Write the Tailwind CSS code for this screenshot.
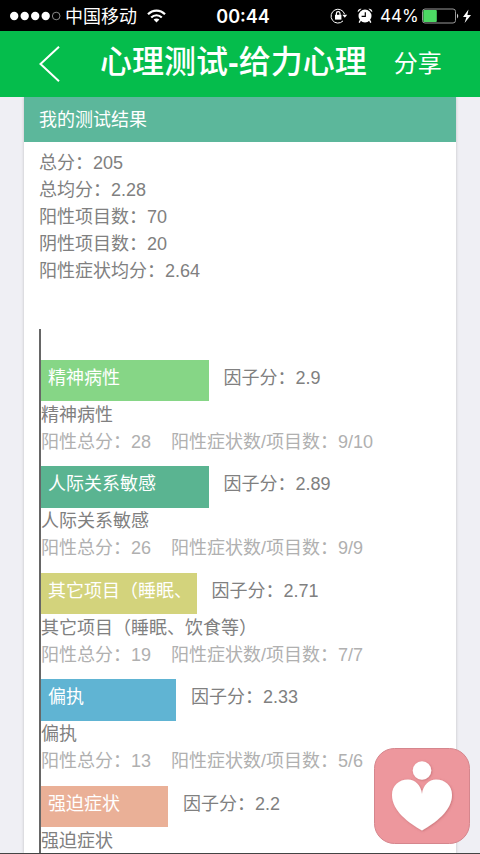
<!DOCTYPE html>
<html lang="zh-CN">
	<head>
		<meta charset="UTF-8" />
		<meta name="viewport" content="width=device-width, initial-scale=1.0" />
		<title>心理测试-给力心理</title>
		<script src="https://cdn.jsdelivr.net/npm/@tailwindcss/browser@4"></script>
	</head>
	<body class="relative flex h-[854px] w-[480px] flex-col overflow-hidden bg-[#efeff4] font-['Liberation_Sans','Noto_Sans_CJK_SC',sans-serif] text-lg leading-[27px] text-[#808080]">
		<!-- Status bar -->
		<div class="grid h-[31px] shrink-0 grid-cols-[207px_72px_1fr] items-center bg-black text-white">
			<div class="flex items-center pl-[10px]">
				<svg class="h-[10px] w-[52px]" viewBox="0 0 52 10" fill="white">
					<circle cx="4.2" cy="5" r="4.2" />
					<circle cx="14.7" cy="5" r="4.2" />
					<circle cx="25.2" cy="5" r="4.2" />
					<circle cx="35.7" cy="5" r="4.2" />
					<circle cx="46.2" cy="5" r="3.8" fill="none" stroke="#aaa" stroke-width="0.8" />
				</svg>
				<span class="ml-[3px] pt-[3px]">中国移动</span>
				<svg class="ml-[10px] h-[14px] w-[19px]" viewBox="0 0 19 14" fill="none" stroke="white" stroke-width="2.2">
					<path d="M1 5.2C5.8 0.3 13.2 0.3 18 5.2" />
					<path d="M4.2 8.5C7.2 5.5 11.8 5.5 14.8 8.5" />
					<path d="M9.5 13.5L6.6 10.5C8.2 9 10.8 9 12.4 10.5Z" fill="white" stroke="none" />
				</svg>
			</div>
			<span class="pt-[2px] text-center font-['Inter',sans-serif] text-[18px] font-semibold">00:44</span>
			<div class="flex items-center pt-px">
				<svg class="ml-[51px] h-4 w-[18px]" viewBox="0 0 18 16" fill="none" stroke="white" stroke-width="1">
					<path d="M14.6 6.2A6.9 6.9 0 1 0 13 12.9" />
					<path d="M12.3 6.8H17.2L14.8 9.8Z" fill="white" stroke="none" />
					<rect x="5" y="6.8" width="6.4" height="4.8" fill="white" stroke="none" />
					<path d="M6.4 7V5.4A1.8 1.8 0 0 1 10 5.4V7" stroke-width="1.2" />
				</svg>
				<svg class="ml-[9px] h-4 w-4" viewBox="0 0 16 16" fill="white">
					<circle cx="8" cy="8" r="6.5" />
					<path d="M0.8 4.2A3 3 0 0 1 4.6 0.8Z" />
					<path d="M15.2 4.2A3 3 0 0 0 11.4 0.8Z" />
					<path d="M3.5 12L2.2 14.6M12.5 12L13.8 14.6" stroke="white" stroke-width="1.4" />
					<path d="M8.3 4.2V8.4H4.6" fill="none" stroke="black" stroke-width="1.2" />
				</svg>
				<span class="ml-[7px] w-[41px] pt-px font-['Inter',sans-serif] text-[17px]">44%</span>
				<svg class="ml-px h-4 w-[50px]" viewBox="0 0 50 16">
					<rect x="0.5" y="1" width="33" height="14" rx="2.5" fill="none" stroke="#999" />
					<rect x="1.3" y="2" width="13.5" height="12" rx="1" fill="#4cd964" />
					<path d="M35 5.5Q37.5 8 35 10.5Z" fill="#ccc" />
					<path d="M46.5 1.5L41 9H44.4L42.6 15L49 7H45.4Z" fill="white" />
				</svg>
			</div>
		</div>

		<!-- Title bar -->
		<header class="z-10 flex h-[66px] shrink-0 items-center bg-[#05bd4c] pb-px text-white">
			<svg class="ml-[39px] h-9 w-[21px]" viewBox="0 0 21 36" fill="none" stroke="white" stroke-width="2">
				<path d="M20 0.8L1.5 18L20 35.2" />
			</svg>
			<h1 class="ml-[40px] pb-[3px] text-[32px] leading-[48px] font-medium">心理测试<b>-</b>给力心理</h1>
			<span class="ml-[27px] text-[24px]">分享</span>
		</header>

		<!-- Result card -->
		<main class="mx-6 flex min-h-0 flex-1 flex-col bg-white shadow-[0_0_3px_rgba(0,0,0,0.2)]">
			<h2 class="h-[45px] shrink-0 bg-[#5cb79b] px-[15px] pt-[10px] text-white">我的测试结果</h2>
			<div class="shrink-0 px-[15px] pt-2">
				<p>总分：205</p>
				<p>总均分：2.28</p>
				<p>阳性项目数：70</p>
				<p>阴性项目数：20</p>
				<p>阳性症状均分：2.64</p>
			</div>

			<!-- Factor bars -->
			<div class="mt-[44px] ml-[15px] flex h-[540px] shrink-0 flex-col gap-[11px] border-l-2 border-[#666] pt-[30.5px]">
				<section class="h-[95.5px]">
					<div class="flex h-[42px]">
						<div class="h-[41.5px] w-[167.5px] bg-[#86d686] pt-[5px] pl-[7px] text-white">精神病性</div>
						<p class="pt-[5px] pl-[15px]">因子分：2.9</p>
					</div>
					<p>精神病性</p>
					<p class="flex gap-5 text-[#b0b0b0]"><span>阳性总分：28</span><span>阳性症状数/项目数：9/10</span></p>
				</section>
				<section class="h-[95.5px]">
					<div class="flex h-[42px]">
						<div class="h-[41.5px] w-[167.5px] bg-[#5ab491] pt-[5px] pl-[7px] text-white">人际关系敏感</div>
						<p class="pt-[5px] pl-[15px]">因子分：2.89</p>
					</div>
					<p>人际关系敏感</p>
					<p class="flex gap-5 text-[#b0b0b0]"><span>阳性总分：26</span><span>阳性症状数/项目数：9/9</span></p>
				</section>
				<section class="h-[95.5px]">
					<div class="flex h-[42px]">
						<div class="h-[41.5px] w-[155.5px] bg-[#d3d37c] pt-[5px] pl-[7px] text-white">其它项目（睡眠、</div>
						<p class="pt-[5px] pl-[15px]">因子分：2.71</p>
					</div>
					<p>其它项目（睡眠、饮食等）</p>
					<p class="flex gap-5 text-[#b0b0b0]"><span>阳性总分：19</span><span>阳性症状数/项目数：7/7</span></p>
				</section>
				<section class="h-[95.5px]">
					<div class="flex h-[42px]">
						<div class="h-[41.5px] w-[135px] bg-[#60b4d3] pt-[5px] pl-[7px] text-white">偏执</div>
						<p class="pt-[5px] pl-[15px]">因子分：2.33</p>
					</div>
					<p>偏执</p>
					<p class="flex gap-5 text-[#b0b0b0]"><span>阳性总分：13</span><span>阳性症状数/项目数：5/6</span></p>
				</section>
				<section class="h-[95.5px]">
					<div class="flex h-[42px]">
						<div class="h-[41.5px] w-[127px] bg-[#eab097] pt-[5px] pl-[7px] text-white">强迫症状</div>
						<p class="pt-[5px] pl-[15px]">因子分：2.2</p>
					</div>
					<p>强迫症状</p>
				</section>
			</div>
		</main>

		<!-- Floating badge -->
		<svg class="absolute top-[748px] left-[374px] h-24 w-24" viewBox="0 0 96 96">
			<defs>
				<filter id="shade" x="-10%" y="-10%" width="120%" height="120%">
					<feDropShadow dx="0.7" dy="0.7" stdDeviation="1" flood-color="#a04850" flood-opacity="0.5" />
				</filter>
			</defs>
			<rect x="0.5" y="0.5" width="95" height="95" rx="20" fill="#ed979d" stroke="#d5868d" />
			<g fill="white" filter="url(#shade)">
				<circle cx="48" cy="22.5" r="9.3" />
				<path d="M48 46C47 37 41 31.5 34 31.5C25 31.5 18 37.5 18 47C18 63 35 75 48 82.5C61 75 78 63 78 47C78 37.5 71 31.5 62 31.5C55 31.5 49 37 48 46Z" />
			</g>
		</svg>
		<div class="absolute bottom-0 left-0 h-px w-full bg-[#444]"></div>
	</body>
</html>
